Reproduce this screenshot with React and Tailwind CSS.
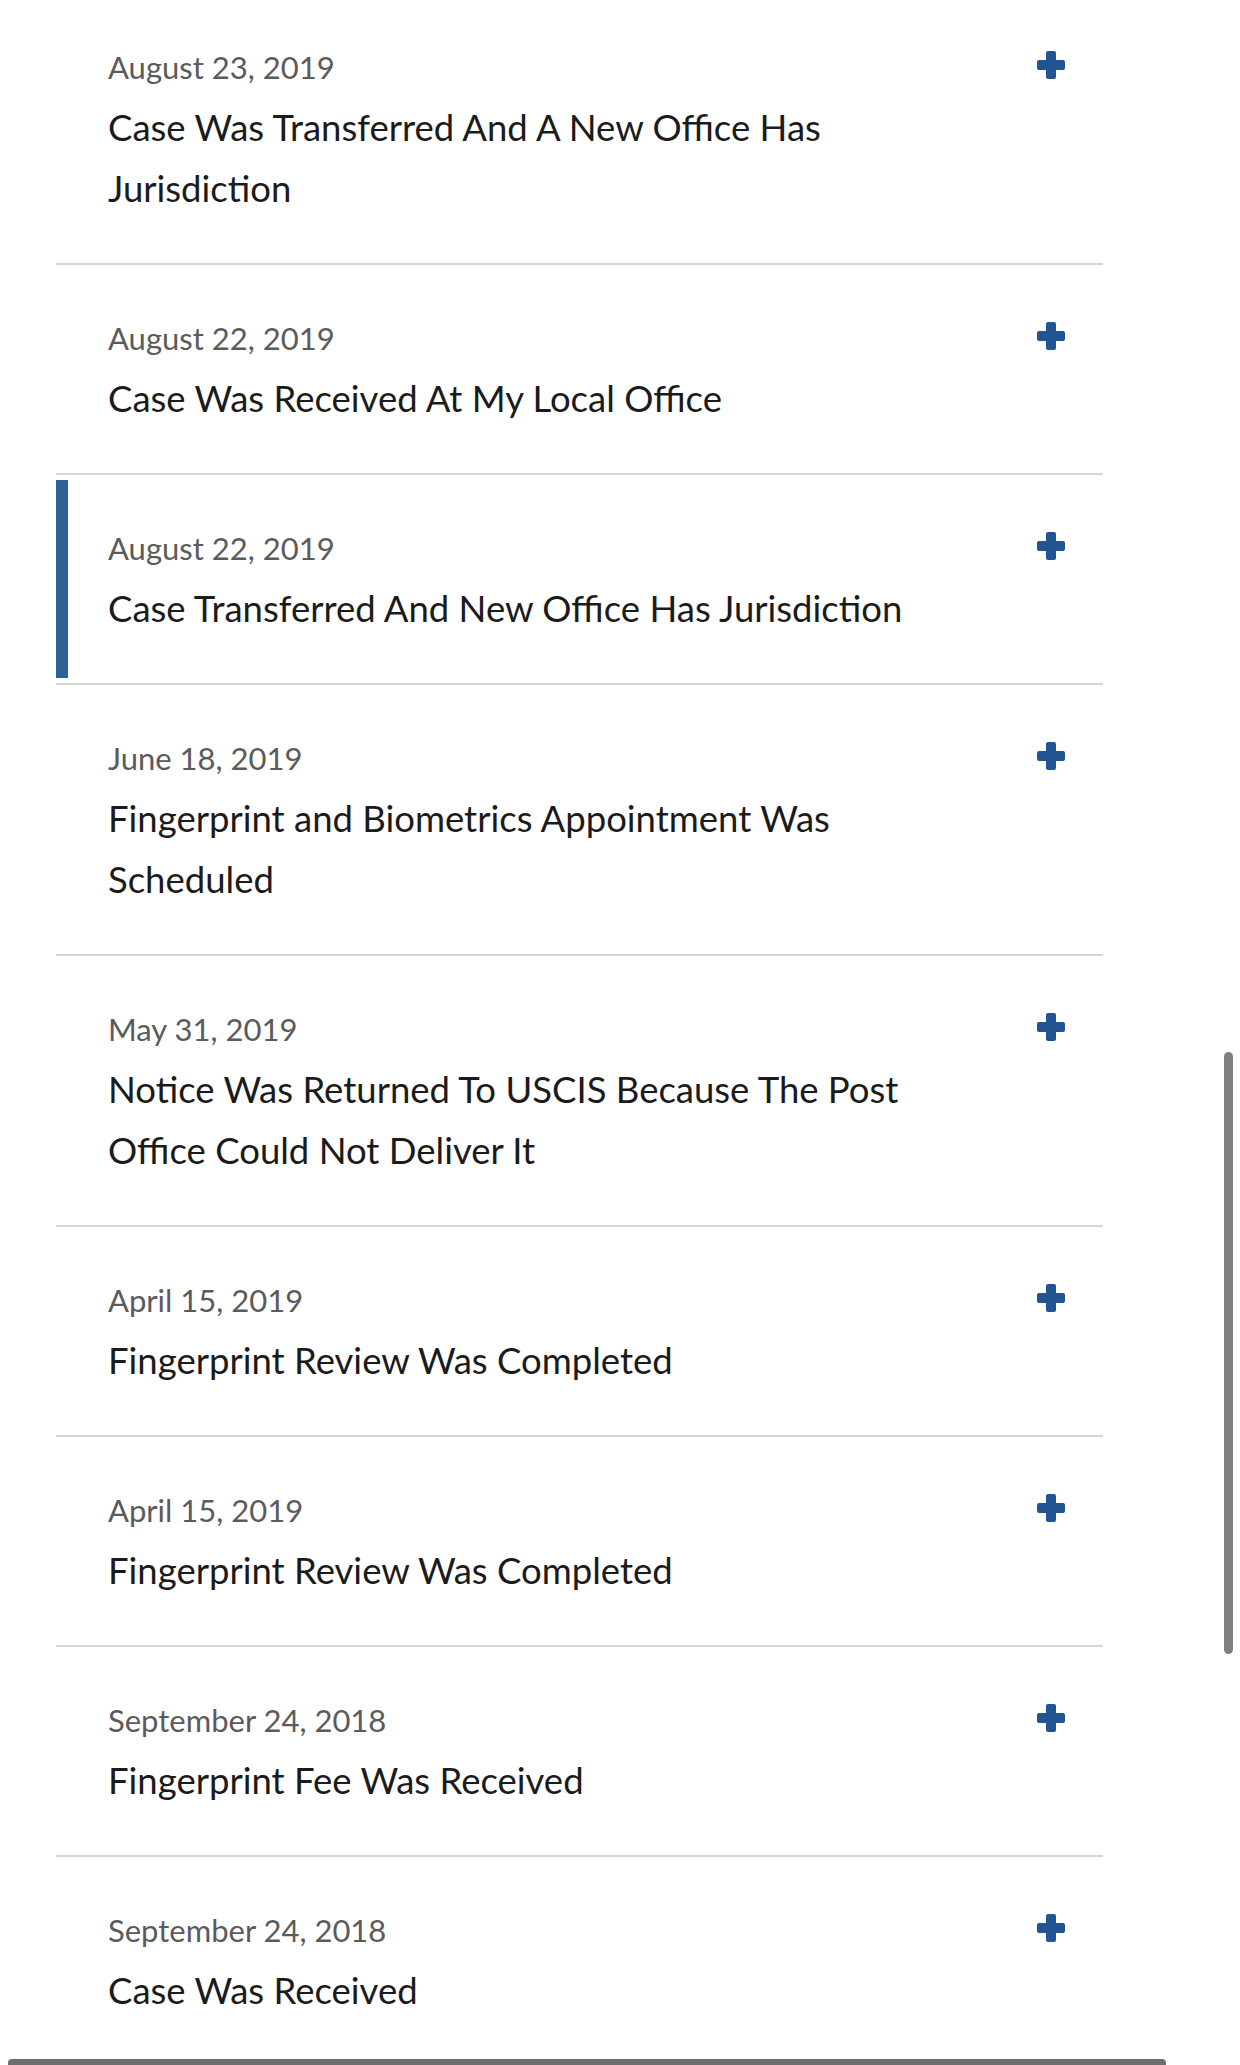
const events = [
  { date: "August 23, 2019", title: "Case Was Transferred And A New Office Has Jurisdiction" },
  { date: "August 22, 2019", title: "Case Was Received At My Local Office" },
  { date: "August 22, 2019", title: "Case Transferred And New Office Has Jurisdiction", active: true },
  { date: "June 18, 2019", title: "Fingerprint and Biometrics Appointment Was Scheduled" },
  { date: "May 31, 2019", title: "Notice Was Returned To USCIS Because The Post Office Could Not Deliver It" },
  { date: "April 15, 2019", title: "Fingerprint Review Was Completed" },
  { date: "April 15, 2019", title: "Fingerprint Review Was Completed" },
  { date: "September 24, 2018", title: "Fingerprint Fee Was Received" },
  { date: "September 24, 2018", title: "Case Was Received" },
]

function PlusIcon() {
  return (
    <svg width="28" height="28" viewBox="0 0 28 28" className="shrink-0 mt-[4px]">
      <rect x="9" y="0" width="10" height="28" rx="2" fill="#205493" />
      <rect x="0" y="9" width="28" height="10" rx="2" fill="#205493" />
    </svg>
  )
}

function HistoryItem({ event, first }) {
  return (
    <div className={`border-b-2 border-[#d6d6d6] ${first ? "-mt-[6px]" : ""}`}>
      <div
        className={`my-[5px] border-l-[12px] pl-[40px] pr-[38px] pt-[48px] pb-[39px] ${
          event.active ? "border-[#2c6297]" : "border-transparent"
        }`}
      >
        <div className="flex items-start justify-between">
          <div className="text-[31px] leading-[40px] text-[#5b5b5b]">{event.date}</div>
          <PlusIcon />
        </div>
        <div className="mt-[10px] max-w-[870px] text-[36.5px] leading-[61px] text-[#1b1b1b]">
          {event.title}
        </div>
      </div>
    </div>
  )
}

export default function App() {
  return (
    <div
      className="relative h-[2065px] w-[1240px] overflow-hidden bg-white"
      style={{ fontFamily: "Lato, 'Noto Sans', sans-serif" }}
    >
      <div className="ml-[56px] w-[1047px]">
        {events.map((e, i) => (
          <HistoryItem key={i} event={e} first={i === 0} />
        ))}
      </div>

      {/* scrollbar */}
      <div className="absolute left-[1224px] top-[1052px] h-[602px] w-[9px] rounded-full bg-[#7f7f7f]" />

      {/* edge of the next panel */}
      <div className="absolute bottom-0 left-[8px] h-[6px] w-[1158px] rounded-t-[4px] bg-[#6e6e6e]" />
    </div>
  )
}
